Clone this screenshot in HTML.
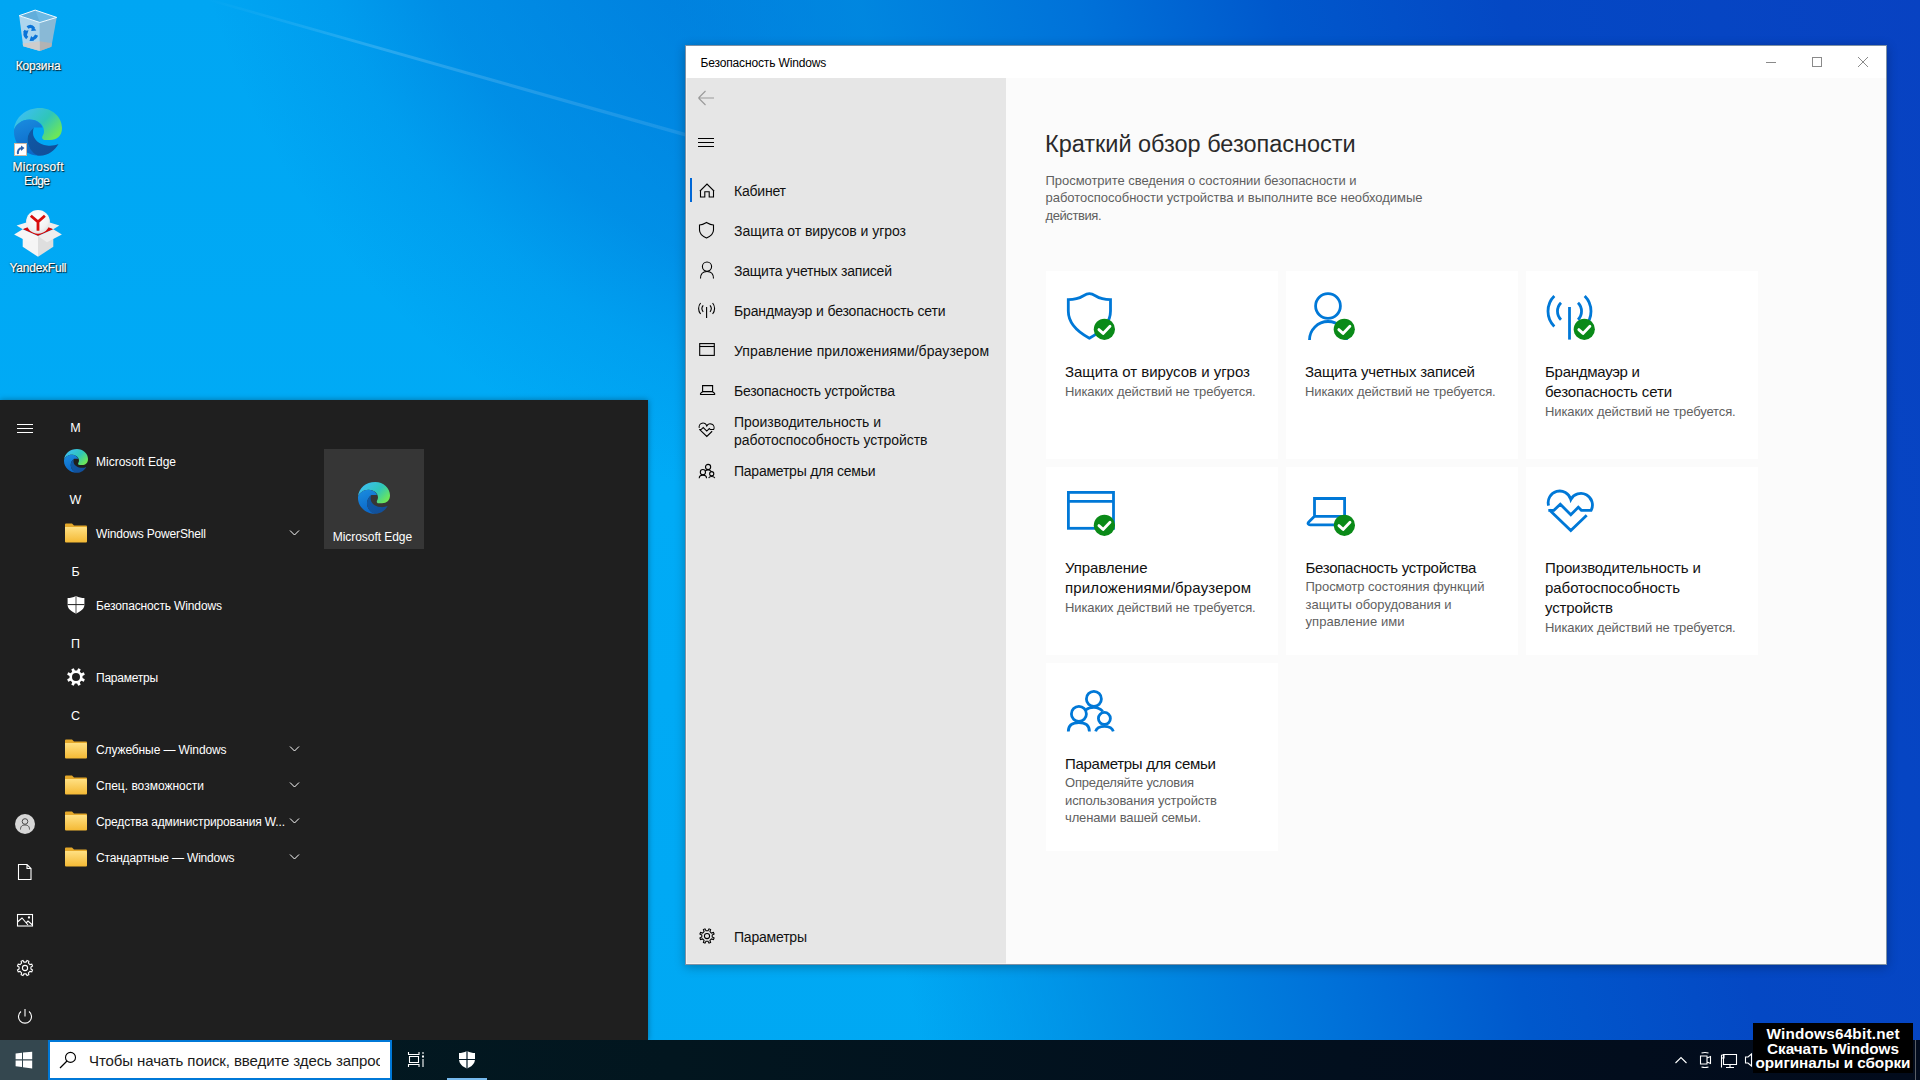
<!DOCTYPE html>
<html><head><meta charset="utf-8"><title>Windows Security</title>
<style>
*{margin:0;padding:0;box-sizing:border-box}
html,body{width:1920px;height:1080px;overflow:hidden}
body{position:relative;font-family:"Liberation Sans", sans-serif;background:#0078d7}
.t{position:absolute;white-space:nowrap}
.a{position:absolute}
svg{position:absolute;overflow:visible}
</style></head>
<body>
<div class="a" style="left:0;top:0;width:1920px;height:1080px;
background:
linear-gradient(76deg, rgba(0,150,235,0) 42.5%, rgba(0,136,224,0.8) 51.5%, #0072d9 61.5%, #0058cc 70.5%, #0448c4 81%, #0842c2 100%),
radial-gradient(circle 720px at 900px -200px, rgba(0,70,190,.42) 0px, rgba(0,70,190,.38) 300px, rgba(0,70,190,.25) 500px, rgba(0,70,190,.1) 600px, rgba(0,70,190,0) 720px),
linear-gradient(180deg, #00a6f3 0px, #00abf6 500px, #00a8f3 1080px);"></div>
<svg style="left:0;top:0" width="1920" height="1080"><defs>
<linearGradient id="bm" x1="0" y1="0" x2="1" y2="0"><stop offset="0" stop-color="#fff" stop-opacity="0"/><stop offset="0.35" stop-color="#fff" stop-opacity="0.16"/><stop offset="1" stop-color="#fff" stop-opacity="0.10"/></linearGradient></defs>
<polygon points="205,0 214,0 700,137 694,139" fill="url(#bm)"/></svg>
<svg style="left:0;top:0" width="80" height="60">
<path d="M19.2,15.7 L39.9,22.5 L39.9,51 L23.2,46.3Z" fill="#aed6ee"/>
<path d="M39.9,22.5 L56.7,17.4 L51.4,46.8 L39.9,51Z" fill="#89b9d6"/>
<path d="M19.2,15.7 L35.2,10.1 L56.7,17.4 L39.9,22.5Z" fill="#6cb9e4"/>
<path d="M19.2,15.7 L35.2,10.1 L39.9,22.5Z" fill="#5aa6d6" opacity=".6"/>
<path d="M22.6,43.5 L39.9,41.2 L39.9,51 L23.2,46.3Z" fill="#cdcdcd"/>
<path d="M39.9,41.2 L52,43.3 L51.4,46.8 L39.9,51Z" fill="#b3b3b3"/>
<path d="M19.2,15.7 L35.2,10.1 L56.7,17.4 L39.9,22.5Z" fill="none" stroke="#f4fbff" stroke-width="1"/>
<g stroke="#0b74d8" stroke-width="3.2" fill="none" stroke-linecap="butt">
<path d="M27.5,27.5 C29.5,26 32,26.2 33.8,28.4"/>
<path d="M25.8,30.5 C24.5,33 24.8,36 27.2,38"/>
<path d="M31,39 C33.5,39 35.6,37.5 36.6,35.2"/>
</g>
<path d="M32.5,25.5 L36.3,30.6 L31.2,31Z M23,31.5 L28.5,30.2 L26.8,35.5Z M29.5,41 L31.2,35.8 L34,40.8Z" fill="#0b74d8"/>
</svg>
<div class="t" style="left:15.70px;top:59.84px;font-size:12px;line-height:12px;color:#fff;letter-spacing:-0.130px;text-shadow:1px 1px 1px rgba(0,0,0,.85),0 0 2px rgba(0,0,0,.7);-webkit-text-stroke:0.2px #fff;">Корзина</div>
<svg style="left:14px;top:108px" width="48" height="48" viewBox="0 0 48 48">
<defs>
<linearGradient id="ea1" x1="0.1" y1="0.2" x2="0.95" y2="0.75"><stop offset="0" stop-color="#3cbff0"/><stop offset="0.55" stop-color="#2fc6b8"/><stop offset="1" stop-color="#6ce65a"/></linearGradient>
<linearGradient id="eb1" x1="0" y1="0" x2="0.3" y2="1"><stop offset="0" stop-color="#1a8de0"/><stop offset="1" stop-color="#0c68c8"/></linearGradient>
<linearGradient id="ec1" x1="0" y1="0" x2="1" y2="1"><stop offset="0" stop-color="#0e5aa8"/><stop offset="1" stop-color="#134d96"/></linearGradient>
</defs>
<path d="M0,22 C1,9 12,0 26,0 C38,0 48,9 48,20 C48,28 43,32 36,32 L31.5,32 C28.5,32 27.5,30 28.5,28 C29.5,26.5 30,25 30,23 C30,16 23,11.5 15.5,11.5 C8,11.5 1.5,16.5 0,22Z" fill="url(#ea1)"/>
<path d="M0,22 C1.5,16.5 8,11.5 15.5,11.5 C22,11.5 27,15 28.5,19.5 L20,19.5 C15.5,23 13,28 13.5,33 C14,40 19.5,46 26,47.7 C11.5,47.7 0,37 0,24Z" fill="url(#eb1)"/>
<path d="M20,19.5 C15.5,23 13,28 13.5,33 C14.5,41 20,47.7 26,47.7 C34,47.7 41,42.5 44.5,36 C41,37.5 37,38 33,37.5 C25,36.5 19,31 19,25 C19,22.5 19.3,20.8 20,19.5Z" fill="url(#ec1)"/>
</svg>
<svg style="left:14px;top:143px" width="13" height="13">
<rect x="0.5" y="0.5" width="12" height="12" fill="#fff" stroke="#cdb9a6" stroke-width="1"/>
<path d="M4,11 C3.5,8 4.5,5.5 8,5" stroke="#2f63ad" stroke-width="2" fill="none"/><path d="M7,2.5 L10.5,5 L7,8Z" fill="#2f63ad"/></svg>
<div class="t" style="left:12.50px;top:160.64px;font-size:12px;line-height:12px;color:#fff;letter-spacing:0.293px;text-shadow:1px 1px 1px rgba(0,0,0,.85),0 0 2px rgba(0,0,0,.7);-webkit-text-stroke:0.2px #fff;">Microsoft</div>
<div class="t" style="left:24.00px;top:174.84px;font-size:12px;line-height:12px;color:#fff;letter-spacing:-0.673px;text-shadow:1px 1px 1px rgba(0,0,0,.85),0 0 2px rgba(0,0,0,.7);-webkit-text-stroke:0.2px #fff;">Edge</div>
<svg style="left:0;top:200px" width="80" height="60">
<defs><radialGradient id="yb" cx="0.45" cy="0.35" r="0.7"><stop offset="0" stop-color="#ffffff"/><stop offset="0.7" stop-color="#f2f2f2"/><stop offset="1" stop-color="#dcdcdc"/></radialGradient></defs>
<path d="M22.7,35 V46.8 L38,56.8 V36Z" fill="#f5f5f5"/>
<path d="M53.3,35 V46.8 L38,56.8 V36Z" fill="#dedede"/>
<path d="M16.6,25.4 L26.3,22.6 L38,25 L22.7,29.3Z" fill="#f3f3f3"/>
<path d="M59.4,25.4 L49.7,22.6 L38,25 L53.3,29.3Z" fill="#ececec"/>
<path d="M22.7,29.3 L38,23 L53.3,29.3 L38,36Z" fill="#d40a0a"/>
<circle cx="38" cy="21.8" r="11.9" fill="url(#yb)"/>
<path d="M30.8,15.7 L38,21.8 L44.9,15.7 M38,21.8 V30.7" stroke="#d80c0c" stroke-width="2.8" fill="none"/>
<path d="M14.1,34.6 L22.7,29.3 L38,36 L29.1,42.3Z" fill="#f7f7f7"/>
<path d="M61.9,34.6 L53.3,29.3 L38,36 L46.9,42.3Z" fill="#eeeeee"/>
</svg>
<div class="t" style="left:9.50px;top:261.54px;font-size:12px;line-height:12px;color:#fff;letter-spacing:-0.240px;text-shadow:1px 1px 1px rgba(0,0,0,.85),0 0 2px rgba(0,0,0,.7);-webkit-text-stroke:0.2px #fff;">YandexFull</div>
<div class="a" style="left:685px;top:45px;width:1202px;height:920px;border:1px solid rgba(0,40,80,.5);background:#fbfbfb;box-shadow:0 2px 10px rgba(0,0,0,.28)"></div>
<div class="a" style="left:686px;top:46px;width:1200px;height:32px;background:#fff"></div>
<div class="a" style="left:686px;top:78px;width:320px;height:886px;background:#f4f1ef"></div>
<div class="a" style="left:687px;top:78px;width:319px;height:885px;background:#e6e6e6"></div>
<div class="t" style="left:700.40px;top:57.24px;font-size:12px;line-height:12px;color:#000;letter-spacing:-0.136px;">Безопасность Windows</div>
<svg style="left:1760px;top:50px" width="120" height="24">
<path d="M6,12.5 H16" stroke="#8a8a8a" stroke-width="1"/>
<rect x="52.5" y="7.5" width="9" height="9" fill="none" stroke="#8a8a8a" stroke-width="1"/>
<path d="M98,7 L108,17 M108,7 L98,17" stroke="#8a8a8a" stroke-width="1"/>
</svg>
<svg style="left:686px;top:78px" width="320" height="80">
<path d="M12.5,20 H28 M12.5,20 L19.5,13 M12.5,20 L19.5,27" stroke="#9a9a9a" stroke-width="1.1" fill="none"/>
<path d="M12,60.5 H28 M12,64.5 H28 M12,68.5 H28" stroke="#000" stroke-width="1.1"/>
</svg>
<div class="a" style="left:690px;top:178px;width:2px;height:24px;background:#0067d6"></div>
<div class="t" style="left:734.00px;top:184.35px;font-size:14px;line-height:14px;color:#111;letter-spacing:-0.212px;">Кабинет</div>
<div class="t" style="left:734.00px;top:224.35px;font-size:14px;line-height:14px;color:#111;letter-spacing:-0.040px;">Защита от вирусов и угроз</div>
<div class="t" style="left:734.00px;top:264.35px;font-size:14px;line-height:14px;color:#111;letter-spacing:-0.213px;">Защита учетных записей</div>
<div class="t" style="left:734.00px;top:304.35px;font-size:14px;line-height:14px;color:#111;letter-spacing:-0.143px;">Брандмауэр и безопасность сети</div>
<div class="t" style="left:734.00px;top:344.35px;font-size:14px;line-height:14px;color:#111;letter-spacing:0.089px;">Управление приложениями/браузером</div>
<div class="t" style="left:734.00px;top:384.35px;font-size:14px;line-height:14px;color:#111;letter-spacing:-0.200px;">Безопасность устройства</div>
<div class="t" style="left:734.00px;top:415.35px;font-size:14px;line-height:14px;color:#111;letter-spacing:-0.033px;">Производительность и</div>
<div class="t" style="left:734.00px;top:433.35px;font-size:14px;line-height:14px;color:#111;letter-spacing:-0.058px;">работоспособность устройств</div>
<div class="t" style="left:734.00px;top:464.35px;font-size:14px;line-height:14px;color:#111;letter-spacing:-0.238px;">Параметры для семьи</div>
<div class="t" style="left:734.00px;top:930.35px;font-size:14px;line-height:14px;color:#111;letter-spacing:-0.203px;">Параметры</div>
<svg style="left:0px;top:0px" width="1920" height="1080">
<g stroke="#000" stroke-width="1.1" fill="none">
<path d="M700.5,197 V190.5 L707,184 L713.5,190.5 V197 H709.2 V191.8 H704.8 V197Z M699.8,191.2 L707,184 L714.2,191.2"/>
<path d="M706.5,222.5 C704,224 701.5,225 699.5,225 V230 C699.5,233.5 702,236 706.5,238 C711,236 713.5,233.5 713.5,230 V225 C711.5,225 709,224 706.5,222.5Z"/>
<circle cx="707" cy="266.6" r="4.6"/><path d="M700.5,278.5 C700.5,274 703,271.5 707,271.5 C711,271.5 713.5,274 713.5,278.5"/>
<path d="M706.6,307 V318 M703.2,305.4 A5,5 0 0 0 703.2,311.8 M710,305.4 A5,5 0 0 1 710,311.8 M700.6,303 A8.6,8.6 0 0 0 700.6,314 M712.6,303 A8.6,8.6 0 0 1 712.6,314"/>
<rect x="699.7" y="343.6" width="14.6" height="11.8"/><path d="M699.7,346.5 H714.3"/>
<path d="M702.6,391.6 V385.6 H712.6 V391.6 Z M702.6,391.8 L700.6,393.4 Q700,394.5 701.2,394.5 H714 Q715.2,394.5 714.6,393.4 L712.6,391.8"/>
</g>
<g transform="translate(698.8,423) scale(0.338)" stroke="#000" stroke-width="3.2" fill="none">
<path d="M1.4,14.7 A11.1,11.1 0 0 1 23.6,8.6 A11.1,11.1 0 0 1 43.9,19.4 L34.2,19.4 L31.1,16.4 L23.6,23.9 L13.1,13.3 L6.7,19.4 L1.1,19.4 M2,18.9 L23.6,39.6 L39.5,24.4"/></g>
<g transform="translate(698.8,463.8) scale(0.345)" stroke="#000" stroke-width="3.2" fill="none"><circle cx="26.9" cy="9.2" r="7.5"/><circle cx="11.9" cy="24.2" r="7.5"/><circle cx="37.4" cy="28.7" r="6"/><path d="M1.3,41.7 C1.3,35.3 6,32.9 11.9,32.9 C17.8,32.9 22.4,35.3 22.4,41.7 M28.6,41.7 C29.5,38.3 32.5,36.7 37.4,36.7 C42.3,36.7 45.3,38.3 46.3,41.7 M19.1,20.1 C21,18.3 23.5,17.6 26.9,17.6 C30.5,17.6 33.5,19.1 35.8,21.7"/></g>
<g stroke="#000" stroke-width="1.05" fill="none">
<circle cx="707" cy="936" r="2.6"/>
<path d="M708.03,930.80 L709.01,928.88 L710.62,929.54 L709.94,931.59 L711.41,933.06 L713.46,932.38 L714.12,933.99 L712.20,934.97 L712.20,937.03 L714.12,938.01 L713.46,939.62 L711.41,938.94 L709.94,940.41 L710.62,942.46 L709.01,943.12 L708.03,941.20 L705.97,941.20 L704.99,943.12 L703.38,942.46 L704.06,940.41 L702.59,938.94 L700.54,939.62 L699.88,938.01 L701.80,937.03 L701.80,934.97 L699.88,933.99 L700.54,932.38 L702.59,933.06 L704.06,931.59 L703.38,929.54 L704.99,928.88 L705.97,930.80Z"/>
</g>
</svg>
<div class="t" style="left:1045.00px;top:133.11px;font-size:23.5px;line-height:23.5px;color:#2a2a2a;letter-spacing:-0.012px;">Краткий обзор безопасности</div>
<div class="t" style="left:1045.50px;top:174.00px;font-size:13px;line-height:13px;color:#5f5f5f;letter-spacing:-0.044px;">Просмотрите сведения о состоянии безопасности и</div>
<div class="t" style="left:1045.50px;top:191.20px;font-size:13px;line-height:13px;color:#5f5f5f;letter-spacing:-0.027px;">работоспособности устройства и выполните все необходимые</div>
<div class="t" style="left:1045.50px;top:209.00px;font-size:13px;line-height:13px;color:#5f5f5f;letter-spacing:-0.418px;">действия.</div>
<div class="a" style="left:1046px;top:271px;width:232px;height:188px;background:#fff"></div>
<div class="a" style="left:1286px;top:271px;width:232px;height:188px;background:#fff"></div>
<div class="a" style="left:1526px;top:271px;width:232px;height:188px;background:#fff"></div>
<div class="a" style="left:1046px;top:467px;width:232px;height:188px;background:#fff"></div>
<div class="a" style="left:1286px;top:467px;width:232px;height:188px;background:#fff"></div>
<div class="a" style="left:1526px;top:467px;width:232px;height:188px;background:#fff"></div>
<div class="a" style="left:1046px;top:663px;width:232px;height:188px;background:#fff"></div>
<svg style="left:0;top:0" width="1920" height="1080">
<g stroke="#0078d7" stroke-width="2.8" fill="none">
<path d="M1068.3,299.6 C1075,299.6 1079,298.5 1083,296 C1086,294.3 1087.5,293.7 1089.4,293.7 C1091.3,293.7 1092.8,294.3 1095.8,296 C1099.8,298.5 1103.8,299.6 1110.5,299.6 V311 C1110.5,324 1101,332 1089.4,338.2 C1077.8,332 1068.3,324 1068.3,311 Z"/>
<circle cx="1328" cy="306" r="12.4"/><path d="M1309.5,340 A18.5,18.5 0 0 1 1346.5,340"/>
<path d="M1569.5,307 V339.6"/>
<path d="M1554.3,296 A21.5,21.5 0 0 0 1554.3,326.4 M1584.7,296 A21.5,21.5 0 0 1 1584.7,326.4 M1561,302.7 A12,12 0 0 0 1561,319.7 M1578,302.7 A12,12 0 0 1 1578,319.7"/>
<rect x="1068.4" y="492.4" width="45.1" height="35.9"/><path d="M1068.4,501.4 H1113.5"/>
<path d="M1314.5,516.3 V498.5 H1344.6 V516.3 Z M1314.5,516.3 L1309,521.8 Q1307.5,523.3 1308.3,524 Q1308.8,524.8 1310,524.8 H1340"/>
<g transform="translate(1547.2,490.9)"><path d="M1.4,14.7 A11.1,11.1 0 0 1 23.6,8.6 A11.1,11.1 0 0 1 43.9,19.4 L34.2,19.4 L31.1,16.4 L23.6,23.9 L13.1,13.3 L6.7,19.4 L1.1,19.4 M2,18.9 L23.6,39.6 L39.5,24.4" stroke-linejoin="miter"/></g>
<g transform="translate(1067,689.7)"><circle cx="26.9" cy="9.2" r="7.5"/><circle cx="11.9" cy="24.2" r="7.5"/><circle cx="37.4" cy="28.7" r="6"/><path d="M1.3,41.7 C1.3,35.3 6,32.9 11.9,32.9 C17.8,32.9 22.4,35.3 22.4,41.7 M28.6,41.7 C29.5,38.3 32.5,36.7 37.4,36.7 C42.3,36.7 45.3,38.3 46.3,41.7 M19.1,20.1 C21,18.3 23.5,17.6 26.9,17.6 C30.5,17.6 33.5,19.1 35.8,21.7"/></g>
</g>
<circle cx="1104.4" cy="329.3" r="10.6" fill="#0a8a18"/><path d="M1098.9,329.6 L1103.1000000000001,333.40000000000003 L1110.0,326.3" stroke="#fff" stroke-width="2.8" stroke-linecap="round" stroke-linejoin="round" fill="none"/><circle cx="1344.3" cy="329.3" r="10.6" fill="#0a8a18"/><path d="M1338.8,329.6 L1343.0,333.40000000000003 L1349.8999999999999,326.3" stroke="#fff" stroke-width="2.8" stroke-linecap="round" stroke-linejoin="round" fill="none"/><circle cx="1584.3" cy="329.3" r="10.6" fill="#0a8a18"/><path d="M1578.8,329.6 L1583.0,333.40000000000003 L1589.8999999999999,326.3" stroke="#fff" stroke-width="2.8" stroke-linecap="round" stroke-linejoin="round" fill="none"/>
<circle cx="1104.4" cy="525.3" r="10.6" fill="#0a8a18"/><path d="M1098.9,525.5999999999999 L1103.1000000000001,529.4 L1110.0,522.3" stroke="#fff" stroke-width="2.8" stroke-linecap="round" stroke-linejoin="round" fill="none"/><circle cx="1344.4" cy="525.3" r="10.6" fill="#0a8a18"/><path d="M1338.9,525.5999999999999 L1343.1000000000001,529.4 L1350.0,522.3" stroke="#fff" stroke-width="2.8" stroke-linecap="round" stroke-linejoin="round" fill="none"/>
</svg>
<div class="t" style="left:1065.00px;top:364.00px;font-size:15px;line-height:15px;color:#111;letter-spacing:-0.014px;">Защита от вирусов и угроз</div>
<div class="t" style="left:1065.00px;top:384.90px;font-size:13px;line-height:13px;color:#5f5f5f;letter-spacing:-0.115px;">Никаких действий не требуется.</div>
<div class="t" style="left:1305.00px;top:364.00px;font-size:15px;line-height:15px;color:#111;letter-spacing:-0.194px;">Защита учетных записей</div>
<div class="t" style="left:1305.00px;top:384.90px;font-size:13px;line-height:13px;color:#5f5f5f;letter-spacing:-0.115px;">Никаких действий не требуется.</div>
<div class="t" style="left:1545.00px;top:364.00px;font-size:15px;line-height:15px;color:#111;letter-spacing:-0.268px;">Брандмауэр и</div>
<div class="t" style="left:1545.00px;top:384.00px;font-size:15px;line-height:15px;color:#111;letter-spacing:-0.125px;">безопасность сети</div>
<div class="t" style="left:1545.00px;top:404.90px;font-size:13px;line-height:13px;color:#5f5f5f;letter-spacing:-0.115px;">Никаких действий не требуется.</div>
<div class="t" style="left:1065.00px;top:559.90px;font-size:15px;line-height:15px;color:#111;letter-spacing:-0.100px;">Управление</div>
<div class="t" style="left:1065.00px;top:579.90px;font-size:15px;line-height:15px;color:#111;letter-spacing:0.161px;">приложениями/браузером</div>
<div class="t" style="left:1065.00px;top:600.90px;font-size:13px;line-height:13px;color:#5f5f5f;letter-spacing:-0.115px;">Никаких действий не требуется.</div>
<div class="t" style="left:1305.50px;top:559.90px;font-size:15px;line-height:15px;color:#111;letter-spacing:-0.283px;">Безопасность устройства</div>
<div class="t" style="left:1305.50px;top:580.00px;font-size:13px;line-height:13px;color:#5f5f5f;letter-spacing:-0.058px;">Просмотр состояния функций</div>
<div class="t" style="left:1305.50px;top:597.50px;font-size:13px;line-height:13px;color:#5f5f5f;letter-spacing:-0.013px;">защиты оборудования и</div>
<div class="t" style="left:1305.50px;top:615.00px;font-size:13px;line-height:13px;color:#5f5f5f;letter-spacing:0.065px;">управление ими</div>
<div class="t" style="left:1545.00px;top:559.90px;font-size:15px;line-height:15px;color:#111;letter-spacing:-0.114px;">Производительность и</div>
<div class="t" style="left:1545.00px;top:579.90px;font-size:15px;line-height:15px;color:#111;letter-spacing:-0.047px;">работоспособность</div>
<div class="t" style="left:1545.00px;top:599.90px;font-size:15px;line-height:15px;color:#111;letter-spacing:-0.134px;">устройств</div>
<div class="t" style="left:1545.00px;top:620.90px;font-size:13px;line-height:13px;color:#5f5f5f;letter-spacing:-0.115px;">Никаких действий не требуется.</div>
<div class="t" style="left:1065.00px;top:755.90px;font-size:15px;line-height:15px;color:#111;letter-spacing:-0.294px;">Параметры для семьи</div>
<div class="t" style="left:1065.00px;top:776.00px;font-size:13px;line-height:13px;color:#5f5f5f;letter-spacing:-0.236px;">Определяйте условия</div>
<div class="t" style="left:1065.00px;top:793.50px;font-size:13px;line-height:13px;color:#5f5f5f;letter-spacing:-0.096px;">использования устройств</div>
<div class="t" style="left:1065.00px;top:811.00px;font-size:13px;line-height:13px;color:#5f5f5f;letter-spacing:-0.139px;">членами вашей семьи.</div>
<div class="a" style="left:0;top:400px;width:648px;height:640px;background:#1f1f1f;box-shadow:0 0 6px rgba(0,0,0,.35)"></div>
<svg style="left:0;top:0" width="648" height="1040"><g stroke="#fff" stroke-width="1.1" fill="none">
<path d="M17,424.5 H33 M17,428.5 H33 M17,432.5 H33"/>
</g></svg>
<div class="t" style="left:70.28px;top:421.82px;font-size:12.5px;line-height:12.5px;color:#fff;">M</div>
<div class="t" style="left:69.59px;top:493.82px;font-size:12.5px;line-height:12.5px;color:#fff;">W</div>
<div class="t" style="left:71.41px;top:565.82px;font-size:12.5px;line-height:12.5px;color:#fff;">Б</div>
<div class="t" style="left:71.00px;top:637.82px;font-size:12.5px;line-height:12.5px;color:#fff;">П</div>
<div class="t" style="left:71.00px;top:709.82px;font-size:12.5px;line-height:12.5px;color:#fff;">С</div>
<div class="t" style="left:96.00px;top:455.84px;font-size:12px;line-height:12px;color:#fff;letter-spacing:-0.003px;">Microsoft Edge</div>
<div class="t" style="left:96.00px;top:527.84px;font-size:12px;line-height:12px;color:#fff;letter-spacing:-0.161px;">Windows PowerShell</div>
<div class="t" style="left:96.00px;top:599.84px;font-size:12px;line-height:12px;color:#fff;letter-spacing:-0.136px;">Безопасность Windows</div>
<div class="t" style="left:96.00px;top:671.84px;font-size:12px;line-height:12px;color:#fff;letter-spacing:-0.245px;">Параметры</div>
<div class="t" style="left:96.00px;top:743.84px;font-size:12px;line-height:12px;color:#fff;letter-spacing:-0.108px;">Служебные — Windows</div>
<div class="t" style="left:96.00px;top:779.84px;font-size:12px;line-height:12px;color:#fff;">Спец. возможности</div>
<div class="t" style="left:96.00px;top:815.84px;font-size:12px;line-height:12px;color:#fff;letter-spacing:-0.148px;">Средства администрирования W...</div>
<div class="t" style="left:96.00px;top:851.84px;font-size:12px;line-height:12px;color:#fff;letter-spacing:-0.180px;">Стандартные — Windows</div>
<svg style="left:64px;top:449px" width="24" height="24" viewBox="0 0 48 48">
<defs>
<linearGradient id="ea2" x1="0.1" y1="0.2" x2="0.95" y2="0.75"><stop offset="0" stop-color="#3cbff0"/><stop offset="0.55" stop-color="#2fc6b8"/><stop offset="1" stop-color="#6ce65a"/></linearGradient>
<linearGradient id="eb2" x1="0" y1="0" x2="0.3" y2="1"><stop offset="0" stop-color="#1a8de0"/><stop offset="1" stop-color="#0c68c8"/></linearGradient>
<linearGradient id="ec2" x1="0" y1="0" x2="1" y2="1"><stop offset="0" stop-color="#0e5aa8"/><stop offset="1" stop-color="#134d96"/></linearGradient>
</defs>
<path d="M0,22 C1,9 12,0 26,0 C38,0 48,9 48,20 C48,28 43,32 36,32 L31.5,32 C28.5,32 27.5,30 28.5,28 C29.5,26.5 30,25 30,23 C30,16 23,11.5 15.5,11.5 C8,11.5 1.5,16.5 0,22Z" fill="url(#ea2)"/>
<path d="M0,22 C1.5,16.5 8,11.5 15.5,11.5 C22,11.5 27,15 28.5,19.5 L20,19.5 C15.5,23 13,28 13.5,33 C14,40 19.5,46 26,47.7 C11.5,47.7 0,37 0,24Z" fill="url(#eb2)"/>
<path d="M20,19.5 C15.5,23 13,28 13.5,33 C14.5,41 20,47.7 26,47.7 C34,47.7 41,42.5 44.5,36 C41,37.5 37,38 33,37.5 C25,36.5 19,31 19,25 C19,22.5 19.3,20.8 20,19.5Z" fill="url(#ec2)"/>
</svg>
<svg style="left:64px;top:523px" width="24" height="20" viewBox="0 0 24 20">
<defs><linearGradient id="fg523" x1="0" y1="0" x2="0" y2="1"><stop offset="0" stop-color="#ffe083"/><stop offset="1" stop-color="#f4b934"/></linearGradient></defs>
<path d="M1,1.5 Q1,0.5 2,0.5 H8 L10,2.5 H22 Q23,2.5 23,3.5 V5 H1Z" fill="#e4a82a"/>
<path d="M1,4 H22 Q23,4 23,5 V18.5 Q23,19.5 22,19.5 H2 Q1,19.5 1,18.5Z" fill="url(#fg523)"/>
</svg>
<svg style="left:64px;top:739px" width="24" height="20" viewBox="0 0 24 20">
<defs><linearGradient id="fg739" x1="0" y1="0" x2="0" y2="1"><stop offset="0" stop-color="#ffe083"/><stop offset="1" stop-color="#f4b934"/></linearGradient></defs>
<path d="M1,1.5 Q1,0.5 2,0.5 H8 L10,2.5 H22 Q23,2.5 23,3.5 V5 H1Z" fill="#e4a82a"/>
<path d="M1,4 H22 Q23,4 23,5 V18.5 Q23,19.5 22,19.5 H2 Q1,19.5 1,18.5Z" fill="url(#fg739)"/>
</svg>
<svg style="left:64px;top:775px" width="24" height="20" viewBox="0 0 24 20">
<defs><linearGradient id="fg775" x1="0" y1="0" x2="0" y2="1"><stop offset="0" stop-color="#ffe083"/><stop offset="1" stop-color="#f4b934"/></linearGradient></defs>
<path d="M1,1.5 Q1,0.5 2,0.5 H8 L10,2.5 H22 Q23,2.5 23,3.5 V5 H1Z" fill="#e4a82a"/>
<path d="M1,4 H22 Q23,4 23,5 V18.5 Q23,19.5 22,19.5 H2 Q1,19.5 1,18.5Z" fill="url(#fg775)"/>
</svg>
<svg style="left:64px;top:811px" width="24" height="20" viewBox="0 0 24 20">
<defs><linearGradient id="fg811" x1="0" y1="0" x2="0" y2="1"><stop offset="0" stop-color="#ffe083"/><stop offset="1" stop-color="#f4b934"/></linearGradient></defs>
<path d="M1,1.5 Q1,0.5 2,0.5 H8 L10,2.5 H22 Q23,2.5 23,3.5 V5 H1Z" fill="#e4a82a"/>
<path d="M1,4 H22 Q23,4 23,5 V18.5 Q23,19.5 22,19.5 H2 Q1,19.5 1,18.5Z" fill="url(#fg811)"/>
</svg>
<svg style="left:64px;top:847px" width="24" height="20" viewBox="0 0 24 20">
<defs><linearGradient id="fg847" x1="0" y1="0" x2="0" y2="1"><stop offset="0" stop-color="#ffe083"/><stop offset="1" stop-color="#f4b934"/></linearGradient></defs>
<path d="M1,1.5 Q1,0.5 2,0.5 H8 L10,2.5 H22 Q23,2.5 23,3.5 V5 H1Z" fill="#e4a82a"/>
<path d="M1,4 H22 Q23,4 23,5 V18.5 Q23,19.5 22,19.5 H2 Q1,19.5 1,18.5Z" fill="url(#fg847)"/>
</svg>
<svg style="left:0;top:0" width="648" height="1040"><g stroke="#fff" stroke-width="1" fill="none">
<path d="M290,530.5 L294.5,535 L299,530.5"/>
<path d="M290,746.5 L294.5,751 L299,746.5"/>
<path d="M290,782.5 L294.5,787 L299,782.5"/>
<path d="M290,818.5 L294.5,823 L299,818.5"/>
<path d="M290,854.5 L294.5,859 L299,854.5"/>
</g>
<path d="M76,596 C73,597.5 70.5,598 67.6,598 V605 C67.6,608.5 71,611.5 76,613.5 C81,611.5 84.4,608.5 84.4,605 V598 C81.5,598 79,597.5 76,596Z" fill="#fff"/>
<path d="M76,596 V613.5" stroke="#777" stroke-width="1.3"/><path d="M67.6,604.6 H84.4" stroke="#1f1f1f" stroke-width="1"/>
<path fill-rule="evenodd" fill="#fff" d="M77.08,670.49 L78.26,668.19 L80.63,669.17 L79.84,671.63 L81.37,673.16 L83.83,672.37 L84.81,674.74 L82.51,675.92 L82.51,678.08 L84.81,679.26 L83.83,681.63 L81.37,680.84 L79.84,682.37 L80.63,684.83 L78.26,685.81 L77.08,683.51 L74.92,683.51 L73.74,685.81 L71.37,684.83 L72.16,682.37 L70.63,680.84 L68.17,681.63 L67.19,679.26 L69.49,678.08 L69.49,675.92 L67.19,674.74 L68.17,672.37 L70.63,673.16 L72.16,671.63 L71.37,669.17 L73.74,668.19 L74.92,670.49Z M80,677 A4,4 0 1 0 72,677 A4,4 0 1 0 80,677Z"/>
<circle cx="25" cy="824" r="10" fill="#d6d6d6"/>
<g stroke="#4a4a4a" stroke-width="1" fill="none"><circle cx="25" cy="821.5" r="2.8"/><path d="M20.5,829.5 C20.5,826 22.5,825 25,825 C27.5,825 29.5,826 29.5,829.5"/></g>
<g stroke="#fff" stroke-width="1.1" fill="none">
<path d="M18.5,864.5 H27 L31,868.5 V879.5 H18.5Z M27,864.5 V868.5 H31"/>
<rect x="17.5" y="914.5" width="15" height="11.5"/><path d="M17.5,922 L22,918 L28,925 M26,923 L28,921 L32.5,925" /><circle cx="29" cy="917.5" r="0.6"/>
<path d="M25,1009 V1016.5 M21,1011.5 A6.5,6.5 0 1 0 29,1011.5"/>
<circle cx="25" cy="968" r="2.6"/>
<path d="M26.05,962.09 L27.06,960.48 L28.86,961.22 L28.43,963.08 L29.92,964.57 L31.78,964.14 L32.52,965.94 L30.91,966.95 L30.91,969.05 L32.52,970.06 L31.78,971.86 L29.92,971.43 L28.43,972.92 L28.86,974.78 L27.06,975.52 L26.05,973.91 L23.95,973.91 L22.94,975.52 L21.14,974.78 L21.57,972.92 L20.08,971.43 L18.22,971.86 L17.48,970.06 L19.09,969.05 L19.09,966.95 L17.48,965.94 L18.22,964.14 L20.08,964.57 L21.57,963.08 L21.14,961.22 L22.94,960.48 L23.95,962.09Z"/>
</g>
</svg>
<div class="a" style="left:324px;top:449px;width:100px;height:100px;background:#363636"></div>
<svg style="left:358px;top:482px" width="32" height="32" viewBox="0 0 48 48">
<defs>
<linearGradient id="ea3" x1="0.1" y1="0.2" x2="0.95" y2="0.75"><stop offset="0" stop-color="#3cbff0"/><stop offset="0.55" stop-color="#2fc6b8"/><stop offset="1" stop-color="#6ce65a"/></linearGradient>
<linearGradient id="eb3" x1="0" y1="0" x2="0.3" y2="1"><stop offset="0" stop-color="#1a8de0"/><stop offset="1" stop-color="#0c68c8"/></linearGradient>
<linearGradient id="ec3" x1="0" y1="0" x2="1" y2="1"><stop offset="0" stop-color="#0e5aa8"/><stop offset="1" stop-color="#134d96"/></linearGradient>
</defs>
<path d="M0,22 C1,9 12,0 26,0 C38,0 48,9 48,20 C48,28 43,32 36,32 L31.5,32 C28.5,32 27.5,30 28.5,28 C29.5,26.5 30,25 30,23 C30,16 23,11.5 15.5,11.5 C8,11.5 1.5,16.5 0,22Z" fill="url(#ea3)"/>
<path d="M0,22 C1.5,16.5 8,11.5 15.5,11.5 C22,11.5 27,15 28.5,19.5 L20,19.5 C15.5,23 13,28 13.5,33 C14,40 19.5,46 26,47.7 C11.5,47.7 0,37 0,24Z" fill="url(#eb3)"/>
<path d="M20,19.5 C15.5,23 13,28 13.5,33 C14.5,41 20,47.7 26,47.7 C34,47.7 41,42.5 44.5,36 C41,37.5 37,38 33,37.5 C25,36.5 19,31 19,25 C19,22.5 19.3,20.8 20,19.5Z" fill="url(#ec3)"/>
</svg>
<div class="t" style="left:332.70px;top:530.54px;font-size:12px;line-height:12px;color:#fff;letter-spacing:-0.042px;">Microsoft Edge</div>
<div class="a" style="left:0;top:1040px;width:1920px;height:40px;background:linear-gradient(90deg,#031a22 0%,#02161f 35%,#020f1e 70%,#020b1c 100%)"></div>
<div class="a" style="left:0;top:1040px;width:48px;height:40px;background:#34474f"></div>
<div class="a" style="left:48px;top:1040px;width:344px;height:40px;background:#fff;border:2px solid #0078d7"></div>
<svg style="left:0;top:1040px" width="500" height="40">
<path d="M15.6,13.5 L22,12.7 V19.3 H15.6Z M23,12.6 L32.2,11.7 V19.3 H23Z M15.6,20.4 H22 V27 L15.6,26.2Z M23,20.4 H32.2 V28.4 L23,27.2Z" fill="#fff"/>
<circle cx="70.5" cy="17.4" r="5" stroke="#000" stroke-width="1.1" fill="none"/><path d="M67,21 L60,28" stroke="#000" stroke-width="1.2"/>
<g stroke="#fff" stroke-width="1.1" fill="none">
<path d="M408.5,12 V14.5 H419 V12 M408.5,27 V24.5 H419 V27 M409.5,16.5 H418.5 V22.5 H409.5Z M423,12 V14 M423,19 V27"/>
</g><rect x="422" y="15.5" width="2" height="2" fill="#fff"/>
<path d="M467,11 C464,12.5 461.5,13 459,13 V19 C459,24 463,27 467,28.5 C471,27 475,24 475,19 V13 C472.5,13 470,12.5 467,11Z" fill="#fff"/>
<path d="M467,11 V28.5 M459,19.5 H475" stroke="#031a28" stroke-width="1.2"/>
<rect x="447" y="38" width="40" height="2" fill="#76b9ed"/>
</svg>
<div class="a" style="left:89px;top:1042px;width:291px;height:36px;overflow:hidden">
<div class="t" style="left:0.00px;top:10.90px;font-size:15px;line-height:15px;color:#1a1a1a;letter-spacing:-0.092px;">Чтобы начать поиск, введите здесь запрос</div>
</div>
<svg style="left:1660px;top:1040px" width="260" height="40"><g stroke="#fff" stroke-width="1.1" fill="none">
<path d="M15.5,23 L21,17.5 L26.5,23"/>
<path d="M40.5,16 H47 V24 H40.5Z M47,18 L50.5,16.5 V23.5 L47,22 M41.5,13 Q45,12 48.5,13 M41.5,27 Q45,28 48.5,27"/>
<path d="M63.5,14.5 H76.5 V24.5 H63.5Z M70,24.5 V27.5 M66,27.5 H74 M61.5,15 V27.5 M61.5,15 H64 V18 H61.5"/>
<path d="M85.5,17 H88 L91.5,14 V26 L88,23 H85.5Z"/>
</g>
<rect x="255" y="0" width="1" height="40" fill="#5a5f66"/>
</svg>
<div class="a" style="left:1753px;top:1023px;width:160px;height:50px;background:#000"></div>
<div class="t" style="left:1766.50px;top:1025.65px;font-size:15.3px;line-height:15.3px;color:#fff;letter-spacing:0.207px;font-weight:bold;">Windows64bit.net</div>
<div class="t" style="left:1767.00px;top:1041.05px;font-size:15.3px;line-height:15.3px;color:#fff;letter-spacing:-0.025px;font-weight:bold;">Скачать Windows</div>
<div class="t" style="left:1755.50px;top:1055.25px;font-size:15.3px;line-height:15.3px;color:#fff;letter-spacing:-0.049px;font-weight:bold;">оригиналы и сборки</div>
</body></html>
